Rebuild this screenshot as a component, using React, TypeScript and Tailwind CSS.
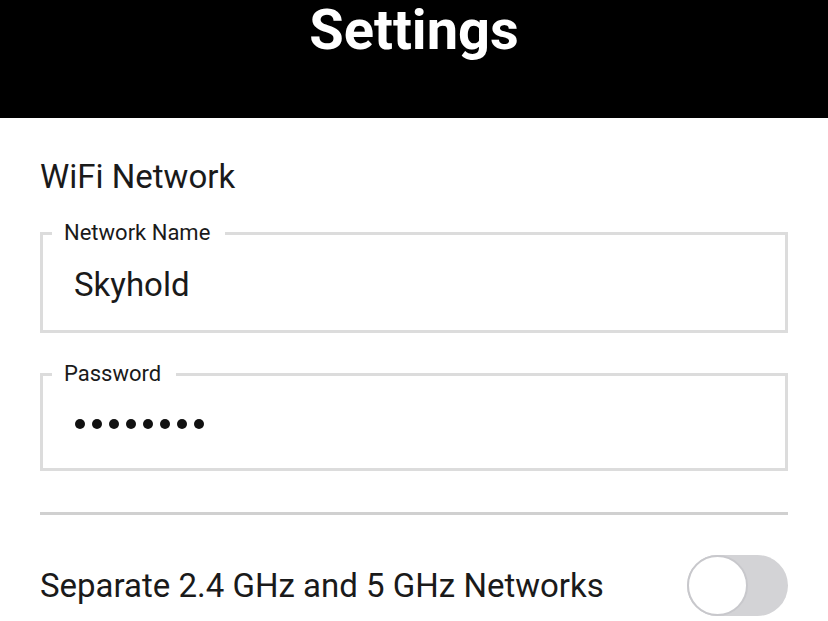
import { useState } from 'react';

const font = { fontFamily: 'Roboto, "Liberation Sans", sans-serif' };

const Field = ({ label, children }: { label: string; children: React.ReactNode }) => (
  <fieldset className="border-[3px] border-[#dcdcdc] m-0 p-0 min-w-0">
    <legend className="ml-[9px] pl-[12px] pr-[15px] text-[22px] leading-none text-[#1a1a1a]">{label}</legend>
    {children}
  </fieldset>
);

const App = () => {
  const [separate, setSeparate] = useState(false);

  return (
    <div className="w-[828px] h-[621px] bg-white overflow-hidden" style={font}>
      <div className="h-[118px] bg-black flex justify-center">
        <h1 className="pt-[2px] text-[56px] leading-none font-bold text-white">Settings</h1>
      </div>

      <div className="px-[40px] pt-[42px]">
        <div className="text-[33px] leading-none text-[#1a1a1a]">WiFi Network</div>

        <div className="mt-[29px]">
          <Field label="Network Name">
            <div className="pl-[31px] pt-[24px] pb-[29px] text-[33px] leading-none text-[#1a1a1a]">Skyhold</div>
          </Field>
        </div>

        <div className="mt-[30px]">
          <Field label="Password">
            <div className="pl-[32px] pt-[34px] pb-[39px] flex gap-[7px]">
              {Array.from({ length: 8 }).map((_, i) => (
                <span key={i} className="w-[10px] h-[10px] rounded-full bg-[#111]" />
              ))}
            </div>
          </Field>
        </div>

        <div className="mt-[41px] h-[3px] bg-[#d0d0d0]" />

        <div className="mt-[40px] flex items-center justify-between">
          <span className="text-[33px] leading-none text-[#1a1a1a]">Separate 2.4 GHz and 5 GHz Networks</span>
          <button
            onClick={() => setSeparate(!separate)}
            className={`w-[101px] h-[61px] rounded-full flex items-center ${separate ? 'bg-[#4cd964] justify-end' : 'bg-[#d3d3d6] justify-start'}`}
          >
            <span className="w-[61px] h-[61px] rounded-full bg-white border-[2px] border-[#c8c8cc]" />
          </button>
        </div>
      </div>
    </div>
  );
};

export default App;
